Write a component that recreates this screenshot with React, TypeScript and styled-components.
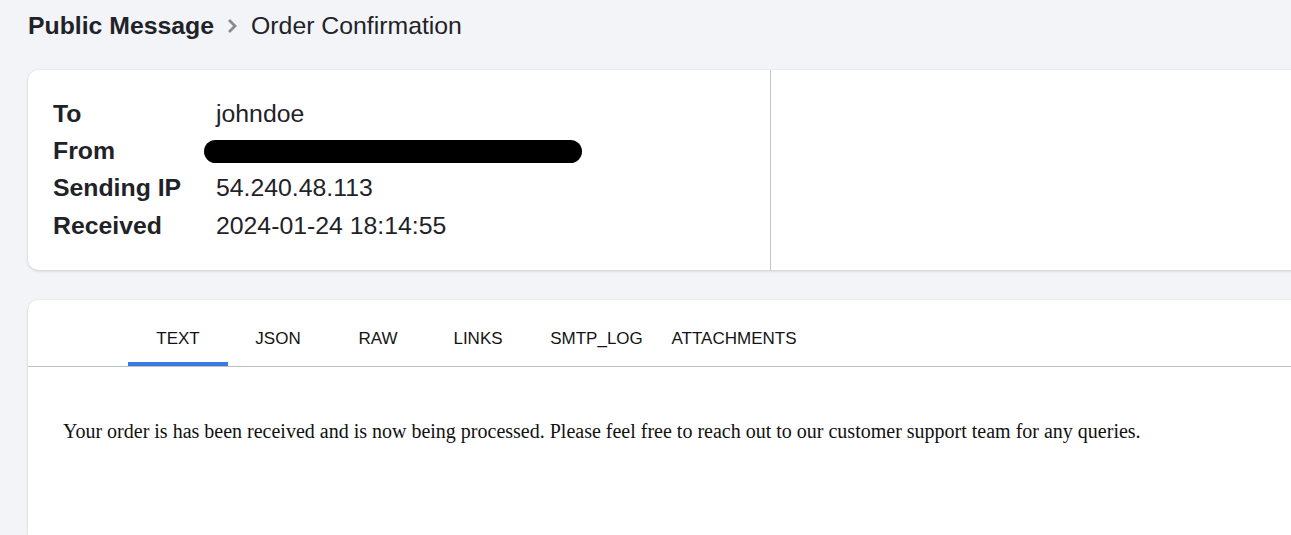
import React from "react";
import styled, { createGlobalStyle } from "styled-components";

const Global = createGlobalStyle`
  html, body { margin: 0; padding: 0; background: #f3f4f8; }
  body { font-family: "Liberation Sans", Arial, sans-serif; overflow: hidden; }
  * { box-sizing: border-box; }
`;

const Page = styled.div`
  width: 1291px;
  height: 535px;
  padding: 7px 0 0 28px;
  display: flex;
  flex-direction: column;
  overflow: hidden;
`;

const Breadcrumb = styled.div`
  display: flex;
  align-items: center;
  height: 38px;
  font-size: 24.8px;
  color: #1f2328;
`;

const Crumb = styled.span<{ $strong?: boolean }>`
  font-weight: ${(p) => (p.$strong ? 700 : 400)};
`;

const Chevron = styled.svg`
  width: 14px;
  height: 18px;
  margin: 0 12px 0 11px;
  color: #8a8a8a;
`;

const HeaderCard = styled.section`
  margin-top: 25px;
  width: 1290px;
  height: 200px;
  flex-shrink: 0;
  background: #fff;
  border-radius: 10px 0 0 10px;
  box-shadow: 0 1px 3px rgba(0, 0, 0, 0.16), 0 0 1px rgba(0, 0, 0, 0.08);
  display: flex;
`;

const MetaPane = styled.div`
  width: 743px;
  border-right: 1px solid #c4c4c4;
  padding: 25px 0 0 25px;
`;

const MetaGrid = styled.dl`
  margin: 0;
  display: grid;
  grid-template-columns: 163px auto;
  grid-auto-rows: 37.4px;
  align-items: center;
  font-size: 24.8px;
  color: #1f2328;
`;

const Label = styled.dt`
  font-weight: 700;
`;

const Value = styled.dd`
  margin: 0;
`;

const Redacted = styled.span`
  display: block;
  width: 378px;
  height: 23px;
  margin-left: -12px;
  background: #000;
  border-radius: 12px;
`;

const ContentCard = styled.section`
  margin-top: 30px;
  width: 1290px;
  flex: 1;
  background: #fff;
  border-radius: 10px 0 0 0;
  box-shadow: 0 1px 3px rgba(0, 0, 0, 0.16), 0 0 1px rgba(0, 0, 0, 0.08);
  display: flex;
  flex-direction: column;
`;

const TabBar = styled.nav`
  display: flex;
  padding: 18px 0 0 100px;
  border-bottom: 1px solid #b9c0c6;
`;

const Tab = styled.div<{ $active?: boolean; $w: number }>`
  width: ${(p) => p.$w}px;
  height: 48px;
  padding-bottom: 2px;
  display: flex;
  align-items: center;
  justify-content: center;
  font-size: 17px;
  color: #141414;
  text-transform: uppercase;
  border-bottom: 4px solid ${(p) => (p.$active ? "#3a7ae0" : "transparent")};
`;

const Body = styled.div`
  padding: 52px 0 0 35px;
  font-family: "Liberation Serif", "Times New Roman", serif;
  font-size: 20px;
  line-height: 24px;
  color: #111;
`;

const tabs: { label: string; w: number }[] = [
  { label: "TEXT", w: 100 },
  { label: "JSON", w: 100 },
  { label: "RAW", w: 100 },
  { label: "LINKS", w: 100 },
  { label: "SMTP_LOG", w: 137 },
  { label: "ATTACHMENTS", w: 138 },
];

export default function App() {
  return (
    <Page>
      <Global />
      <Breadcrumb>
        <Crumb $strong>Public Message</Crumb>
        <Chevron viewBox="0 0 14 18" aria-hidden>
          <path d="M4 3 L10 9 L4 15" fill="none" stroke="currentColor" strokeWidth="2.8" />
        </Chevron>
        <Crumb>Order Confirmation</Crumb>
      </Breadcrumb>

      <HeaderCard>
        <MetaPane>
          <MetaGrid>
            <Label>To</Label>
            <Value>johndoe</Value>
            <Label>From</Label>
            <Value>
              <Redacted />
            </Value>
            <Label>Sending IP</Label>
            <Value>54.240.48.113</Value>
            <Label>Received</Label>
            <Value>2024-01-24 18:14:55</Value>
          </MetaGrid>
        </MetaPane>
      </HeaderCard>

      <ContentCard>
        <TabBar>
          {tabs.map((t, i) => (
            <Tab key={t.label} $w={t.w} $active={i === 0}>
              {t.label}
            </Tab>
          ))}
        </TabBar>
        <Body>
          Your order is has been received and is now being processed. Please feel free to reach out to our customer
          support team for any queries.
        </Body>
      </ContentCard>
    </Page>
  );
}
